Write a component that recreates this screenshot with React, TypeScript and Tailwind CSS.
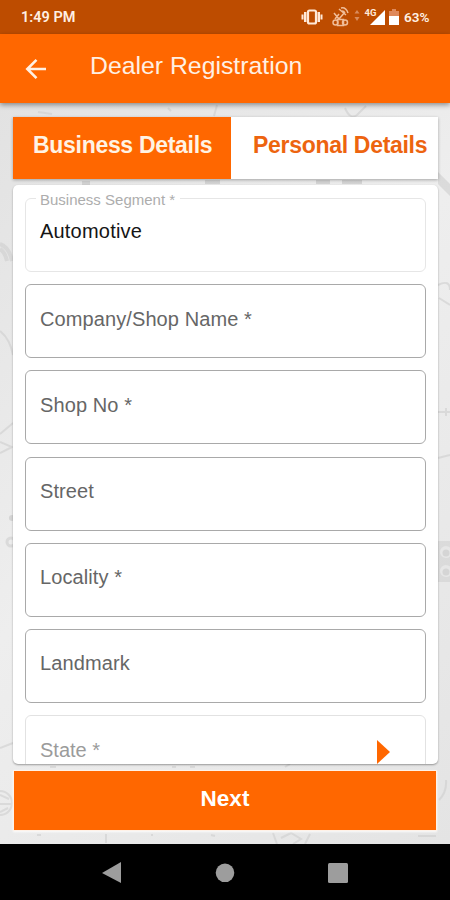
import React from "react";

const labels = ["Company/Shop Name *", "Shop No *", "Street", "Locality *", "Landmark"];

function Backdrop() {
  return (
    <svg className="absolute inset-0 h-full w-full opacity-60" viewBox="0 103 450 741" preserveAspectRatio="none" fill="none" stroke="#cfcfcf" strokeWidth="2">
      <path d="M0 331q10 8 13 24M0 434l13-11M0 442l12 5-12 6M38 112l14 2M168 108l3 3M214 116l3-11M345 108q5 12 12 7l9-9" />
      <path d="M0 244q9 3 12 17M0 249q5 3 7 12" strokeWidth="4" />
      <path d="M438 285q12-6 12 5M439 298l11 7M438 412h12M446 408v8M438 458l12-3M0 748l13-5M439 800q8-8 7-20" />
      <path d="M438 172l12 12v12l-12-12z" fill="#cfcfcf" stroke="none" />
      <path d="M316 182h14M342 182h20M205 182h15M82 183h8" stroke="#c3c3c3" strokeWidth="4" />
      <path d="M438 541h12v41h-12z" fill="#d2d2d2" stroke="none" />
      <g fill="#e6e6e6" stroke="none">
        <circle cx="446" cy="552" r="6" />
        <circle cx="446" cy="571" r="6" />
      </g>
      <g fill="#c9c9c9" stroke="none">
        <circle cx="446" cy="553" r="3.500" />
        <circle cx="446" cy="572" r="3.500" />
      </g>
      <circle cx="12" cy="518" r="3" fill="#c6c6c6" stroke="none" />
      <circle cx="11" cy="542" r="4" strokeWidth="3" />
      <circle cx="0" cy="803" r="12" />
      <path d="M0 795l9 4M0 804h12M0 812l8-4M37 835h4M106 834v9M151 835h2M211 835l4 1M273 833l4 11M310 834l-5 10M281 838l10-5 10 6-8 5M50 767h6M172 767h4M190 767h5M285 767l5-3M418 836h18" />
    </svg>
  );
}

function StatusIcons() {
  return (
    <svg className="h-[34px] w-[104px] shrink-0" viewBox="298 0 104 34" fill="#ffe9d8">
      <rect x="308" y="10.500" width="8" height="13" rx="1.500" fill="none" stroke="#ffe9d8" strokeWidth="2.200" />
      <path d="M304 12h2.500v10H304zM301.500 14.500h2v5h-2zM317.500 12h2.500v10h-2.500zM320.500 14.500h2v5h-2z" />
      <g fill="none" stroke="#f0bd98" strokeWidth="1.500">
        <path d="M334 13l5 6 6-7M335 19l4-5M339 9l7 6M341 8q5-1 7 5M342 11q2 0 3 2" />
        <circle cx="335.500" cy="22.500" r="2.500" />
        <rect x="337.500" y="19.500" width="6" height="6" />
        <circle cx="345" cy="22.500" r="2.500" />
      </g>
      <path d="M357 10l2.500 3.500h-5zM354.500 17h5l-2.500 4z" fill="#d98c5d" />
      <path d="M385 10v15h-15z" fill="#fff" />
      <text x="364.500" y="16" fontSize="9.500" fontWeight="700" fontFamily="Roboto, sans-serif" textLength="12">4G</text>
      <path d="M392 9h4v2h3v6h-10v-6h3z" fill="#df895b" />
      <path d="M389 16h10v9h-10z" fill="#fff" />
    </svg>
  );
}

function Field({ label }: { label: string }) {
  return (
    <div className="h-[74px] shrink-0 rounded-[6px] border-[1.500px] border-[#a9a9a9] px-[14px] pt-[21.500px] text-[20px] leading-[24px] tracking-[0.1px] text-[#666]">
      {label}
    </div>
  );
}

export default function App() {
  return (
    <div className="flex h-[900px] w-[450px] flex-col overflow-hidden bg-[#e7e7e7] font-['Liberation_Sans',Arial,sans-serif]">
      <div className="flex h-[34px] shrink-0 items-center bg-[#bd4c00] pl-[21px] font-[Roboto,sans-serif] text-[#fff0e3]">
        <span className="mt-[2px] text-[14.500px] font-semibold">1:49 PM</span>
        <div className="ml-auto flex items-center pr-[20px]">
          <StatusIcons />
          <span className="mt-[1px] ml-[2px] w-[26px] text-[13.500px] font-semibold whitespace-nowrap">63%</span>
        </div>
      </div>
      <header className="z-10 flex h-[69px] shrink-0 items-center bg-[#ff6700] text-[#fff0e3] shadow-[0_2px_5px_rgba(0,0,0,0.4)]">
        <svg className="ml-[25px] h-[22px] w-[22px]" viewBox="0 0 22 22" fill="none" stroke="currentColor" strokeWidth="2.600">
          <path d="M21 11H3M11.500 1.800L2.300 11l9.200 9.200" />
        </svg>
        <h1 className="mb-[5px] ml-[43px] text-[24.800px] font-normal whitespace-nowrap">Dealer Registration</h1>
      </header>
      <main className="relative flex-1 bg-[linear-gradient(135deg,#e2e2e2,#eeeeee_45%,#e4e4e4)]">
        <Backdrop />
        <div className="relative flex h-full flex-col pt-[14px] pr-[12px] pl-[13px]">
          <div className="flex h-[62px] shrink-0 text-[23px] leading-[28px] font-bold tracking-[-0.3px] whitespace-nowrap shadow-[0_1px_3px_rgba(0,0,0,0.3)]">
            <div className="w-[218px] bg-[#ff6700] pt-[14px] pl-[20px] text-[#fff3e4]">Business Details</div>
            <div className="flex-1 bg-white pt-[14px] pl-[22px] text-[#ed640f]">Personal Details</div>
          </div>
          <div className="mt-[6px] flex h-[579px] shrink-0 flex-col gap-[12.200px] overflow-hidden rounded-[5px] bg-white px-[12px] pt-[6px] shadow-[0_1px_2px_rgba(0,0,0,0.35)]">
            <fieldset className="h-[81px] shrink-0 rounded-[6px] border-[1.500px] border-[#e6e6e6] pl-[14px]">
              <legend className="-ml-[4px] h-[15px] pr-[5px] pl-[4px] text-[15px] leading-[17px] text-[#adadad]">Business Segment *</legend>
              <div className="pt-[13px] text-[20px] leading-[24px] tracking-[0.2px] text-[#151515]">Automotive</div>
            </fieldset>
            {labels.map((label) => (
              <Field key={label} label={label} />
            ))}
            <div className="flex h-[74px] shrink-0 justify-between rounded-[6px] border-[1.500px] border-[#e2e2e2] pt-[22px] pr-[35px] pl-[14px] text-[20px] leading-[24px] text-[#9b9b9b]">
              State *
              <svg className="mt-[2px] h-[24px] w-[13px]" viewBox="0 0 13 24" fill="#ff6700">
                <path d="M0 0l13 12L0 24z" />
              </svg>
            </div>
          </div>
          <button className="mt-[6px] mr-px h-[61px] shrink-0 border border-[#fff2e8] bg-[#ff6700] pb-[4px] text-[22.500px] font-bold text-white shadow-[0_1px_2px_rgba(255,255,255,0.9)]">Next</button>
        </div>
      </main>
      <nav className="h-[56px] shrink-0 bg-black">
        <svg className="h-[56px] w-[450px]" viewBox="0 0 450 56" fill="#9d9d9d">
          <path d="M102 29l19-11v21z" />
          <circle cx="225" cy="28.800" r="9.300" />
          <rect x="328" y="19" width="20" height="20" rx="1.500" />
        </svg>
      </nav>
    </div>
  );
}
